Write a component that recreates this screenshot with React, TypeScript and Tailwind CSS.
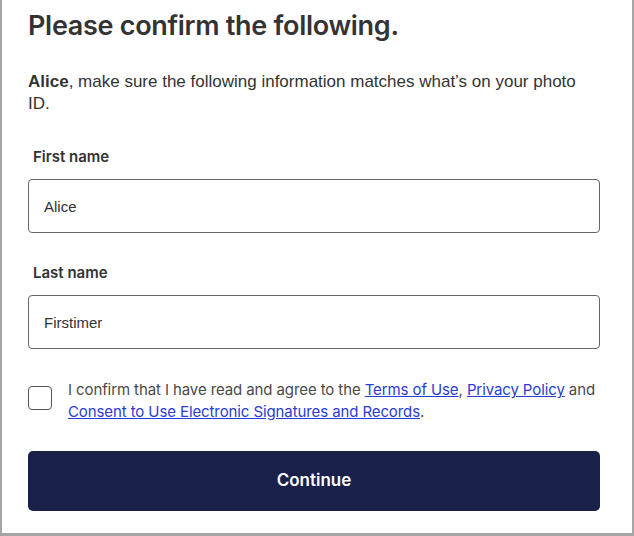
export default function App() {
  return (
    <div className="w-[634px] h-[536px] bg-white border-x-2 border-b-[3px] border-[#a5a5a5] pl-[26px] pr-[32px] overflow-hidden">
      <h1 className="pt-[10px] text-[27px] leading-[32px] font-semibold text-[#333333] tracking-[-0.3px] font-['Inter',sans-serif]">
        Please confirm the following.
      </h1>
      <p className="mt-[29px] text-[17px] leading-[22px] text-[#333333] font-['Liberation_Sans',Arial,sans-serif]">
        <span className="font-bold">Alice</span>, make sure the following information matches what’s on your photo ID.
      </p>

      <Field label="First name" value="Alice" className="mt-[32px]" />
      <Field label="Last name" value="Firstimer" className="mt-[30px]" />

      <div className="mt-[30px] flex items-start gap-4">
        <input
          type="checkbox"
          className="appearance-none mt-[7px] w-6 h-6 shrink-0 rounded-[4px] border-[1.5px] border-[#555555] bg-white"
        />
        <p className="text-[15px] leading-[22px] text-[#4a4a4a] font-['Inter',sans-serif] tracking-[-0.1px]">
          I confirm that I have read and agree to the{' '}
          <a href="#" className="text-[#2b3bd6] underline">Terms of Use</a>,{' '}
          <a href="#" className="text-[#2b3bd6] underline">Privacy Policy</a> and{' '}
          <a href="#" className="text-[#2b3bd6] underline">Consent to Use Electronic Signatures and Records</a>.
        </p>
      </div>

      <button
        type="button"
        className="mt-[28px] w-full h-[60px] rounded-[5px] bg-[#19204a] text-white text-[17px] font-semibold font-['Inter',sans-serif]"
      >
        Continue
      </button>
    </div>
  );
}

function Field({ label, value, className }: { label: string; value: string; className?: string }) {
  return (
    <div className={className}>
      <label className="block pl-[5px] text-[15px] leading-[20px] font-semibold text-[#333333] font-['Inter',sans-serif]">
        {label}
      </label>
      <input
        readOnly
        value={value}
        className="mt-[12px] block w-full h-[54px] rounded-[4px] border border-[#666666] px-[15px] text-[15px] text-[#333333] font-['Liberation_Sans',Arial,sans-serif] outline-none"
      />
    </div>
  );
}
